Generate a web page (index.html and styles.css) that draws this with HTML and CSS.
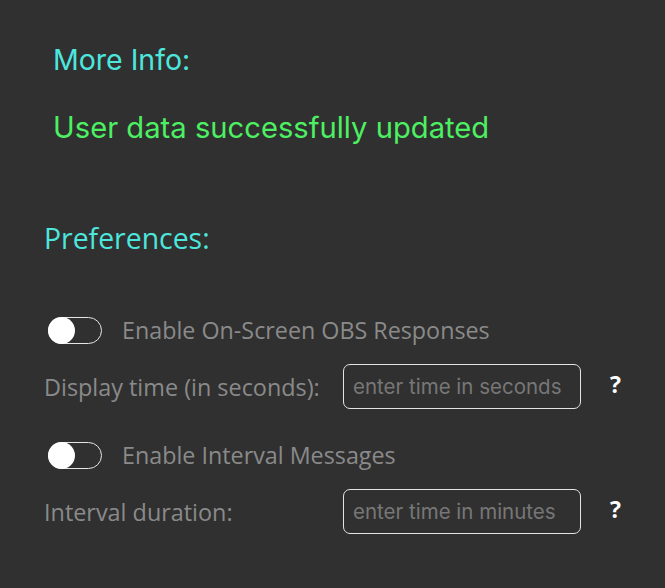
FILE: index.html
```html
<!DOCTYPE html>
<html lang="en">
<head>
<meta charset="utf-8">
<title>Preferences</title>
<link rel="stylesheet" href="styles.css">
</head>
<body>
<main class="page">
  <section class="info">
    <h2 class="info-title">More Info:</h2>
    <p class="status">User data successfully updated</p>
  </section>
  <section class="prefs">
    <h2 class="prefs-title">Preferences:</h2>
    <div class="toggle-row">
      <span class="switch"><span class="knob"></span></span>
      <span class="toggle-label">Enable On-Screen OBS Responses</span>
    </div>
    <div class="field-row">
      <label class="field-label">Display time (in seconds):</label>
      <input class="field-input" type="text" placeholder="enter time in seconds">
      <span class="help">?</span>
    </div>
    <div class="toggle-row">
      <span class="switch"><span class="knob"></span></span>
      <span class="toggle-label">Enable Interval Messages</span>
    </div>
    <div class="field-row">
      <label class="field-label">Interval duration:</label>
      <input class="field-input" type="text" placeholder="enter time in minutes">
      <span class="help">?</span>
    </div>
  </section>
</main>
</body>
</html>
```
FILE: styles.css
```css
html, body {
  margin: 0;
  padding: 0;
  background: #303030;
}
.page {
  width: 665px;
  height: 588px;
  box-sizing: border-box;
  padding-top: 42px;
}
.info {
  padding-left: 53px;
}
.info-title {
  margin: 0;
  font-family: "Inter", sans-serif;
  font-weight: 400;
  font-size: 28.5px;
  line-height: 36px;
  color: #4de6dd;
}
.status {
  margin: 32px 0 0;
  font-family: "Inter", sans-serif;
  font-size: 29.2px;
  line-height: 36px;
  color: #4cf062;
}
.prefs {
  padding-left: 44px;
  margin-top: 74px;
}
.prefs-title {
  margin: 0 0 60px;
  font-family: "Open Sans", sans-serif;
  font-weight: 400;
  font-size: 28.4px;
  line-height: 36px;
  color: #4de6dd;
}
.toggle-row {
  display: flex;
  align-items: center;
  height: 28px;
  padding-left: 4px;
}
.switch {
  box-sizing: border-box;
  display: flex;
  flex: none;
  width: 54px;
  height: 27px;
  border: 1px solid #e6e6e6;
  border-radius: 14px;
}
.knob {
  width: 27px;
  height: 27px;
  margin: -1px;
  border-radius: 50%;
  background: #ffffff;
}
.toggle-label {
  margin-left: 20px;
  font-family: "Open Sans", sans-serif;
  font-size: 23.3px;
  color: #8a8a8a;
}
.field-row {
  display: flex;
  align-items: center;
  margin: 20px 0 32px;
}
.field-label {
  width: 299px;
  flex: none;
  font-family: "Open Sans", sans-serif;
  font-size: 23.4px;
  color: #8a8a8a;
}
.field-input {
  box-sizing: border-box;
  width: 238px;
  height: 45px;
  padding: 0 9px;
  border: 1px solid #e4e4e4;
  border-radius: 7px;
  background: transparent;
  font-family: "Inter", sans-serif;
  font-size: 20.5px;
  color: #cccccc;
  outline: none;
}
.field-input::placeholder {
  color: #777777;
}
.help {
  margin-left: 29px;
  padding-bottom: 5px;
  font-family: "Open Sans", sans-serif;
  font-weight: 700;
  font-size: 23px;
  color: #ffffff;
}
```
